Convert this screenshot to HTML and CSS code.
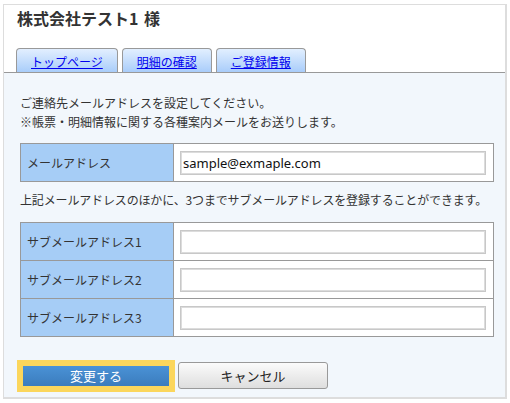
FILE: index.html
```html
<!DOCTYPE html>
<html lang="ja">
<head>
<meta charset="utf-8">
<title>ご登録情報</title>
<link rel="stylesheet" href="styles.css">
</head>
<body>
<div class="frame">
  <div class="header">
    <h1 class="title">株式会社テスト1 様</h1>
    <ul class="tabs">
      <li class="tab"><a href="#">トップページ</a></li>
      <li class="tab"><a href="#">明細の確認</a></li>
      <li class="tab"><a href="#">ご登録情報</a></li>
    </ul>
  </div>
  <div class="content">
    <p class="lead">ご連絡先メールアドレスを設定してください。<br>※帳票・明細情報に関する各種案内メールをお送りします。</p>
    <table class="form">
      <tr>
        <th>メールアドレス</th>
        <td><input class="field" type="text" value="sample@exmaple.com"></td>
      </tr>
    </table>
    <p class="note">上記メールアドレスのほかに、3つまでサブメールアドレスを登録することができます。</p>
    <table class="form">
      <tr>
        <th>サブメールアドレス1</th>
        <td><input class="field" type="text" value=""></td>
      </tr>
      <tr>
        <th>サブメールアドレス2</th>
        <td><input class="field" type="text" value=""></td>
      </tr>
      <tr>
        <th>サブメールアドレス3</th>
        <td><input class="field" type="text" value=""></td>
      </tr>
    </table>
    <div class="actions">
      <button class="btn-primary" type="button">変更する</button>
      <button class="btn-cancel" type="button">キャンセル</button>
    </div>
  </div>
</div>
</body>
</html>
```
FILE: styles.css
```css
html, body {
  margin: 0;
  padding: 0;
  background: #ffffff;
}
body {
  font-family: "Noto Sans CJK JP", "Noto Sans", sans-serif;
  color: #333333;
  font-size: 12px;
}
.frame {
  margin: 4px 3px 3px 3px;
  border: 1px solid #dddddd;
  border-right-width: 2px;
  border-bottom-width: 2px;
}
.header {
  background: #ffffff;
}
.title {
  margin: 0;
  padding: 1px 0 0 13px;
  font-size: 16px;
  line-height: 24px;
  font-weight: bold;
  color: #333333;
  word-spacing: 2px;
}
.tabs {
  list-style: none;
  margin: 18px 0 0 0;
  padding: 0 0 0 12px;
  display: flex;
  gap: 4px;
}
.tab {
  height: 23px;
  padding: 0 14px;
  border: 1px solid #999999;
  border-bottom: none;
  border-radius: 4px 4px 0 0;
  background: linear-gradient(#e2efff, #a9cdfa);
  display: flex;
  align-items: center;
}
.tab a {
  color: #0000ee;
  text-decoration: underline;
  font-size: 12px;
  line-height: 16px;
  padding-top: 2px;
}
.content {
  background: #f2f7fc;
  border-top: 1px solid #999999;
  padding: 20px 16px 8px 16px;
}
.lead {
  margin: 0;
  line-height: 19px;
}
.note {
  margin: 8px 0 0 0;
  line-height: 19px;
  white-space: nowrap;
  letter-spacing: -0.15px;
}
.form {
  width: 474px;
  border-collapse: collapse;
  margin-top: 12px;
}
.note + .form {
  margin-top: 13px;
}
.form th,
.form td {
  border: 1px solid #999999;
  height: 37px;
  padding: 0;
}
.form th {
  width: 146px;
  background: #a6cdf6;
  text-align: left;
  font-weight: normal;
  padding-left: 6px;
  color: #333333;
}
.form td {
  background: #ffffff;
  padding: 0 7px 0 6px;
}
.field {
  display: block;
  box-sizing: border-box;
  width: 100%;
  height: 24px;
  margin: 0;
  border: 1px solid #c8c8c8;
  box-shadow: inset 0 0 0 1px #dcdcdc;
  padding: 0 2px;
  font-family: "Noto Sans", "Noto Sans CJK JP", sans-serif;
  font-size: 13px;
  color: #111111;
  background: #ffffff;
}
.actions {
  display: flex;
  align-items: center;
  padding-left: 3px;
  margin-top: 25px;
}
.btn-primary {
  width: 146px;
  height: 20px;
  border: none;
  outline: 6px solid #fbd65c;
  background: linear-gradient(#4a92d6, #3b7cbd);
  color: #ffffff;
  font-family: "Noto Sans CJK JP", sans-serif;
  font-size: 13px;
  line-height: 18px;
  padding: 0;
}
.btn-cancel {
  margin-left: 9px;
  width: 150px;
  height: 27px;
  border: 1px solid #999999;
  border-radius: 3px;
  background: linear-gradient(#fbfbfb, #dedede);
  color: #222222;
  font-family: "Noto Sans CJK JP", sans-serif;
  font-size: 13px;
  padding: 0;
}
```
